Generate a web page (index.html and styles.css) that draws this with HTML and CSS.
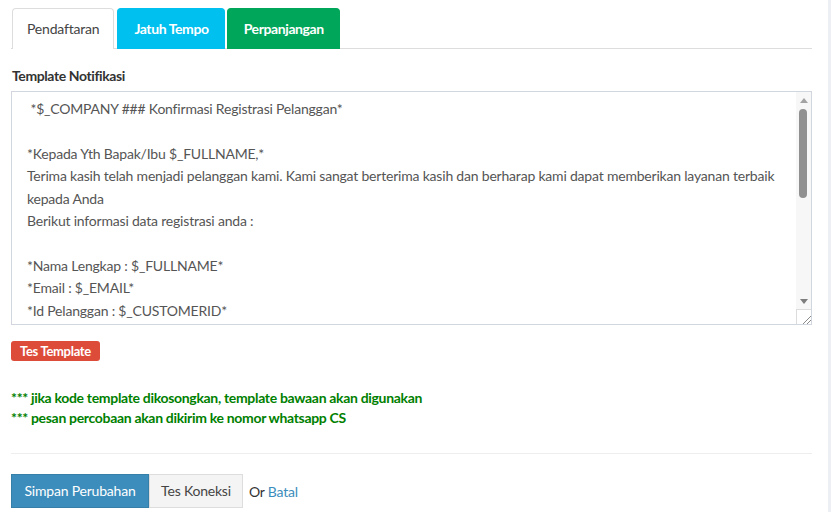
FILE: index.html
```html
<!DOCTYPE html>
<html lang="id">
<head>
<meta charset="utf-8">
<title>Template Notifikasi</title>
<link rel="stylesheet" href="styles.css">
</head>
<body>
<div class="page">
  <div class="box">
    <ul class="tabs">
      <li class="tab active">Pendaftaran</li>
      <li class="tab tab-info">Jatuh Tempo</li>
      <li class="tab tab-success">Perpanjangan</li>
    </ul>
    <div class="form-group">
      <label class="label" for="tpl">Template Notifikasi</label>
      <div class="textarea-wrap">
        <textarea id="tpl" class="form-control" spellcheck="false"> *$_COMPANY ### Konfirmasi Registrasi Pelanggan*

*Kepada Yth Bapak/Ibu $_FULLNAME,*
Terima kasih telah menjadi pelanggan kami. Kami sangat berterima kasih dan berharap kami dapat memberikan layanan terbaik kepada Anda
Berikut informasi data registrasi anda :

*Nama Lengkap : $_FULLNAME*
*Email : $_EMAIL*
*Id Pelanggan : $_CUSTOMERID*
*Username : $_USERNAME*
*Password : $_PASSWORD*
*Paket : $_PACKAGE*
*Harga : $_PRICE*

Terima kasih</textarea>
        <div class="scrollbar" aria-hidden="true">
          <div class="sb-btn"><span class="arrow-up"></span></div>
          <div class="sb-track"><div class="sb-thumb"></div></div>
          <div class="sb-btn"><span class="arrow-down"></span></div>
          <div class="sb-corner"></div>
        </div>
      </div>
    </div>
    <button class="btn-xs btn-danger" type="button">Tes Template</button>
    <div class="notes">
      <p>*** jika kode template dikosongkan, template bawaan akan digunakan</p>
      <p>*** pesan percobaan akan dikirim ke nomor whatsapp CS</p>
    </div>
    <hr class="divider">
    <div class="actions">
      <button class="btn btn-primary" type="button">Simpan Perubahan</button><button class="btn btn-default" type="button">Tes Koneksi</button>
      <span class="or">Or <a href="#" class="link">Batal</a></span>
    </div>
  </div>
  <div class="side"></div>
</div>
</body>
</html>
```
FILE: styles.css
```css
* { box-sizing: border-box; }
html, body { margin: 0; padding: 0; }
body {
  font-family: Lato, "Open Sans", sans-serif;
  font-size: 14px;
  letter-spacing: -0.2px;
  color: #333;
  background: #fff;
}
.page {
  display: flex;
  width: 831px;
  height: 512px;
  overflow: hidden;
}
.box {
  width: 828px;
  padding: 8px 16px 0 11px;
  background: #fff;
}
.side {
  flex: 1;
  background: #ecf0f5;
}
.tabs {
  list-style: none;
  margin: 0;
  padding: 0 0 0 1px;
  display: flex;
  border-bottom: 1px solid #ddd;
  height: 41px;
}
.tab {
  height: 41px;
  margin-right: 2px;
  padding: 0 15px;
  line-height: 40px;
  border: 1px solid transparent;
  border-bottom: 0;
  border-radius: 4px 4px 0 0;
  font-weight: bold;
  letter-spacing: -0.4px;
  color: #fff;
}
.tab.active {
  background: #fff;
  border-color: #ddd;
  color: #444;
  font-weight: normal;
  letter-spacing: -0.2px;
  margin-right: 3px;
  padding: 0 14px;
}
.tab-info { background: #00c0ef; border-color: #00c0ef; padding: 0 15px 0 16px; }
.tab-success { background: #00a65a; border-color: #00a65a; padding: 0 15px 0 16px; }
.form-group {
  display: flex;
  flex-direction: column;
  margin-top: 17px;
}
.label {
  font-weight: bold;
  letter-spacing: -0.4px;
  line-height: 20px;
  margin: 0 0 5px 1px;
  color: #333;
}
.textarea-wrap {
  position: relative;
  width: 801px;
  height: 234px;
}
.form-control {
  display: block;
  width: 801px;
  height: 234px;
  border: 1px solid #d2d6de;
  border-radius: 0;
  padding: 6px 27px 6px 15px;
  font-family: Lato, "Open Sans", sans-serif;
  font-size: 14px;
  letter-spacing: -0.2px;
  line-height: 22.4px;
  color: #555;
  background: #fff;
  margin: 0;
  resize: none;
  overflow: hidden;
}
.scrollbar {
  position: absolute;
  top: 1px;
  right: 1px;
  bottom: 1px;
  width: 15px;
  display: flex;
  flex-direction: column;
  background: #f7f7f7;
}
.sb-btn {
  height: 15px;
  display: flex;
  align-items: center;
  justify-content: center;
}
.arrow-up {
  width: 0;
  height: 0;
  border-left: 4px solid transparent;
  border-right: 4px solid transparent;
  border-bottom: 5px solid #a3a3a3;
  margin-top: 1px;
}
.arrow-down {
  width: 0;
  height: 0;
  border-left: 4px solid transparent;
  border-right: 4px solid transparent;
  border-top: 5px solid #7d7d7d;
}
.sb-track {
  flex: 1;
  padding: 2px 0 0 3px;
}
.sb-thumb {
  width: 8px;
  height: 89px;
  border-radius: 4px;
  background: #909090;
}
.sb-corner {
  height: 15px;
  background-color: #fff;
  border-top: 1px solid #dcdcdc;
  border-left: 1px solid #dcdcdc;
  background-image: linear-gradient(135deg, transparent 0 13.5px, #8a8a8a 13.5px 14.5px, transparent 14.5px 16.5px, #8a8a8a 16.5px 17.5px, transparent 17.5px);
}
.btn-xs {
  display: block;
  margin-top: 16px;
  height: 20px;
  padding: 0 9px;
  border: 0;
  border-radius: 3px;
  font-family: inherit;
  font-size: 13px;
  font-weight: bold;
  letter-spacing: -0.3px;
  line-height: 20px;
}
.btn-danger { background: #dd4b39; color: #fff; }
.notes {
  margin-top: 27px;
  color: #008000;
  font-weight: bold;
  letter-spacing: -0.32px;
}
.notes p { margin: 0; line-height: 20px; }
.divider {
  margin: 25px 0 0;
  border: 0;
  border-top: 1px solid #eee;
  width: 801px;
}
.actions {
  display: flex;
  align-items: center;
  margin-top: 20px;
}
.btn {
  height: 34px;
  padding: 0;
  border: 1px solid transparent;
  border-radius: 0;
  font-family: inherit;
  font-size: 14px;
  letter-spacing: -0.2px;
  line-height: 32px;
  white-space: nowrap;
  text-align: center;
}
.btn-primary {
  background: #3c8dbc;
  border-color: #367fa9;
  color: #fff;
  width: 138px;
}
.btn-default {
  background: #f4f4f4;
  border-color: #ddd;
  color: #444;
  width: 94px;
}
.or { margin-left: 6px; color: #333; }
.link { color: #3c8dbc; text-decoration: none; }
```
